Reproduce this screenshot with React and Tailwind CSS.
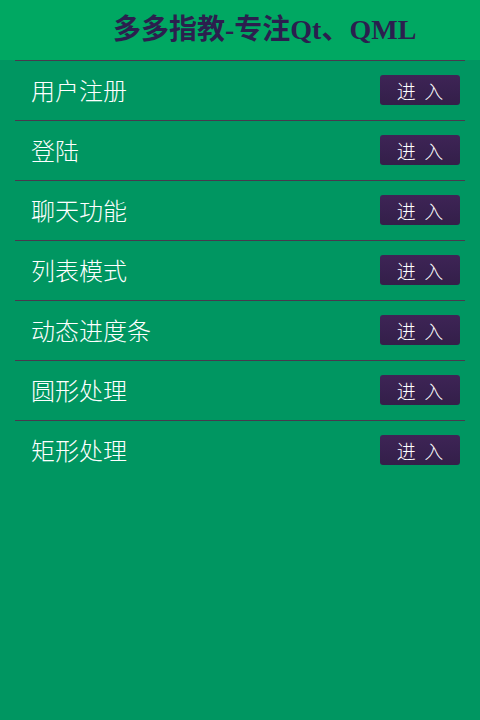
import React from 'react';

const items = ['用户注册', '登陆', '聊天功能', '列表模式', '动态进度条', '圆形处理', '矩形处理'];

const cjk = { fontFamily: '"Noto Sans CJK SC", sans-serif' };

export default function App() {
  return (
    <div className="w-[480px] h-[720px] bg-[#009661] flex flex-col">
      {/* 标题栏 */}
      <div className="h-[60px] bg-[#00a862] flex items-center pl-[113px]">
        <span
          className="text-[28px] font-bold text-[#2b1f4e] leading-none whitespace-nowrap"
          style={{ fontFamily: '"Liberation Serif", "Noto Sans CJK SC", serif' }}
        >
          多多指教-专注Qt、QML
        </span>
      </div>

      <div className="px-[15px]">
        {items.map((name) => (
          <div
            key={name}
            className="h-[60px] pb-[1px] flex items-center justify-between border-t border-[#463a4e]"
          >
            <span className="pl-[16px] text-[24px] font-light text-white" style={cjk}>
              {name}
            </span>
            <button
              type="button"
              className="w-[80px] h-[30px] mr-[5px] rounded-[3px] bg-gradient-to-b from-[#3e2456] to-[#331f49] text-white text-[19px] font-light leading-none flex items-center justify-center"
              style={cjk}
            >
              进&nbsp;&nbsp;入
            </button>
          </div>
        ))}
      </div>
    </div>
  );
}
